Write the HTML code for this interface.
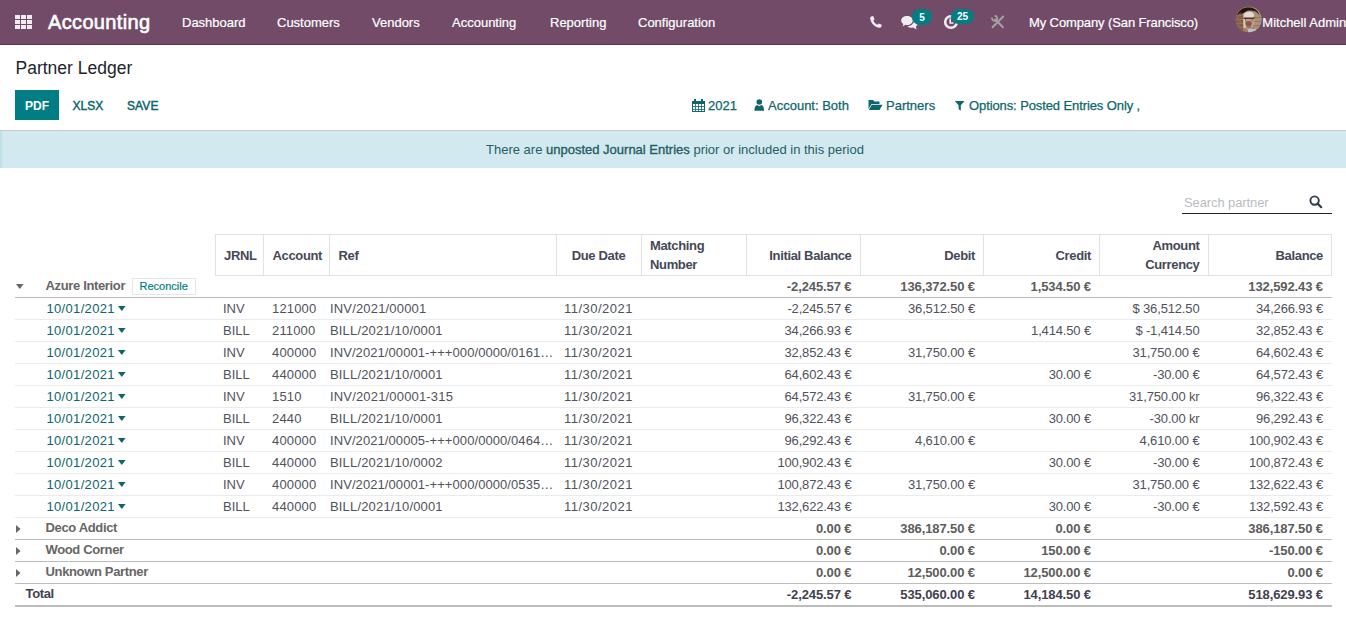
<!DOCTYPE html>
<html><head><meta charset="utf-8"><title>Partner Ledger</title>
<style>
html,body{margin:0;padding:0;background:#fff;}
body{width:1346px;height:624px;position:relative;overflow:hidden;font-family:"Liberation Sans", sans-serif;}
.t{position:absolute;white-space:nowrap;}
.r{position:absolute;display:block;}
</style></head><body>
<div class="r" style="left:0px;top:0px;width:1346px;height:44px;background:#714B67;"></div>
<div class="r" style="left:0px;top:44px;width:1346px;height:1px;background:#52364b;"></div>
<svg class="r" style="left:0;top:0" width="40" height="40"><rect x="15" y="15" width="5" height="4" fill="#f1ecf0"/><rect x="15" y="20" width="5" height="4" fill="#f1ecf0"/><rect x="15" y="25" width="5" height="4" fill="#f1ecf0"/><rect x="21" y="15" width="5" height="4" fill="#f1ecf0"/><rect x="21" y="20" width="5" height="4" fill="#f1ecf0"/><rect x="21" y="25" width="5" height="4" fill="#f1ecf0"/><rect x="27" y="15" width="5" height="4" fill="#f1ecf0"/><rect x="27" y="20" width="5" height="4" fill="#f1ecf0"/><rect x="27" y="25" width="5" height="4" fill="#f1ecf0"/></svg>
<div class="t" style="left:48px;top:12.07px;font-size:20px;line-height:20px;font-weight:400;color:#ffffff;letter-spacing:0.35px;-webkit-text-stroke:0.6px #fff;">Accounting</div>
<div class="t" style="left:182px;top:15.60px;font-size:13px;line-height:13px;font-weight:400;color:#ffffff;-webkit-text-stroke:0.2px #fff;">Dashboard</div>
<div class="t" style="left:277px;top:15.60px;font-size:13px;line-height:13px;font-weight:400;color:#ffffff;-webkit-text-stroke:0.2px #fff;">Customers</div>
<div class="t" style="left:372px;top:15.60px;font-size:13px;line-height:13px;font-weight:400;color:#ffffff;-webkit-text-stroke:0.2px #fff;">Vendors</div>
<div class="t" style="left:452px;top:15.60px;font-size:13px;line-height:13px;font-weight:400;color:#ffffff;-webkit-text-stroke:0.2px #fff;">Accounting</div>
<div class="t" style="left:550px;top:15.60px;font-size:13px;line-height:13px;font-weight:400;color:#ffffff;-webkit-text-stroke:0.2px #fff;">Reporting</div>
<div class="t" style="left:638px;top:15.60px;font-size:13px;line-height:13px;font-weight:400;color:#ffffff;-webkit-text-stroke:0.2px #fff;">Configuration</div>
<svg class="r" style="left:869px;top:15px" width="14" height="14" viewBox="0 0 14 14"><path d="M2.2 1.6 L4.2 1.1 L5.6 4.4 L4.3 5.5 C5 7.3 6.6 8.9 8.4 9.7 L9.5 8.4 L12.8 9.8 L12.3 11.8 C12 12.6 11.3 12.9 10.6 12.8 C5.8 12.2 1.9 8.3 1.2 3.4 C1.1 2.5 1.5 1.8 2.2 1.6 Z" fill="#f1ecf0"/></svg>
<svg class="r" style="left:900px;top:14px" width="20" height="17" viewBox="0 0 20 17"><path d="M7 2 C3.7 2 1.2 4 1.2 6.5 C1.2 8 2 9.2 3.3 10 L2.6 12.4 L5.5 10.8 C6 10.9 6.5 11 7 11 C10.3 11 12.8 9 12.8 6.5 C12.8 4 10.3 2 7 2 Z" fill="#f1ecf0"/><path d="M14 6.5 C14 9.6 11 12 7.5 12.2 C8.5 13.2 10 13.8 11.7 13.8 C12.2 13.8 12.6 13.7 13 13.6 L16.6 15.4 L15.8 12.6 C17 11.8 17.8 10.7 17.8 9.4 C17.8 7.9 16.7 6.6 14 6.5 Z" fill="#f1ecf0"/></svg>
<div class="r" style="left:912px;top:9px;width:20px;height:16px;background:#017e84;border-radius:8px;"></div>
<div class="t" style="left:622px;width:600px;text-align:center;top:12.54px;font-size:10px;line-height:10px;font-weight:700;color:#ffffff;">5</div>
<svg class="r" style="left:943px;top:14px" width="17" height="17" viewBox="0 0 17 17"><circle cx="8" cy="8" r="5.8" fill="none" stroke="#f1ecf0" stroke-width="2.6"/><path d="M7.2 4.5 L7.2 9 L10.5 9" fill="none" stroke="#f1ecf0" stroke-width="1.6"/></svg>
<div class="r" style="left:951px;top:9px;width:23px;height:15px;background:#017e84;border-radius:8px;"></div>
<div class="t" style="left:662.5px;width:600px;text-align:center;top:12.04px;font-size:10px;line-height:10px;font-weight:700;color:#ffffff;">25</div>
<svg class="r" style="left:991px;top:15px" width="14" height="14" viewBox="0 0 14 14"><path d="M12.2 1.6 L1.6 12.3" stroke="#a79fa6" stroke-width="2.1" stroke-linecap="round"/><path d="M4.2 4.2 L11.9 12.2" stroke="#a79fa6" stroke-width="2" stroke-linecap="round"/><path d="M1.2 2.6 A2.6 2.6 0 1 0 3.6 0.8" fill="none" stroke="#a79fa6" stroke-width="1.7"/></svg>
<div class="t" style="left:1029px;top:15.60px;font-size:13px;line-height:13px;font-weight:400;color:#ffffff;letter-spacing:-0.11px;-webkit-text-stroke:0.2px #fff;">My Company (San Francisco)</div>
<svg class="r" style="left:1235px;top:6px" width="28" height="28" viewBox="0 0 28 28"><defs><clipPath id="avc"><circle cx="13.6" cy="13.4" r="12.9"/></clipPath></defs><g clip-path="url(#avc)"><rect x="0" y="0" width="28" height="28" fill="#9c7f68"/><rect x="0" y="0" width="8" height="28" fill="#8c5a3e"/><path d="M0 9.5 H8 M0 13.5 H8 M0 17.5 H8 M0 21.5 H8 M3 9.5 V13.5 M5 13.5 V17.5 M3 17.5 V21.5" stroke="#7d8290" stroke-width="1" opacity="0.6"/><rect x="19" y="0" width="9" height="28" fill="#ab9277"/><path d="M19 11.5 H28 M19 15.5 H28 M19 19.5 H28" stroke="#7f6d60" stroke-width="1" opacity="0.6"/><ellipse cx="13.8" cy="15" rx="5.8" ry="9" fill="#c29b82"/><rect x="8.5" y="6" width="2" height="16" fill="#ddd6d0" opacity="0.8"/><ellipse cx="14.2" cy="9" rx="5" ry="3.6" fill="#e4d9cf"/><path d="M8.5 12.3 H19.5" stroke="#4e3530" stroke-width="1.5"/><path d="M10.5 13 V15.5 M17 13 V15.5" stroke="#4e3530" stroke-width="0.8" opacity="0.7"/><ellipse cx="13.6" cy="17.5" rx="3.2" ry="2.6" fill="#7e4d3e" opacity="0.85"/><ellipse cx="13.8" cy="21" rx="2.5" ry="1.2" fill="#a36d5a"/><rect x="13" y="23" width="8" height="5" fill="#b9c3cb"/><path d="M2 9.5 C4.5 3 10 1.5 14 1.6 C18.5 1.7 22.5 3.5 24.5 9.5 C22 5.5 19 4.3 14 4.5 C9 4.6 5.5 6 2 9.5 Z" fill="#21150f"/><path d="M5 8 C7 5 10 3 14 3 L9 7 Z" fill="#21150f"/></g></svg>
<div class="t" style="left:1262.3px;top:15.60px;font-size:13px;line-height:13px;font-weight:400;color:#ffffff;-webkit-text-stroke:0.2px #fff;">Mitchell Admin</div>
<div class="t" style="left:15.5px;top:60.49px;font-size:17.5px;line-height:17.5px;font-weight:400;color:#212529;">Partner Ledger</div>
<div class="r" style="left:15px;top:90px;width:44px;height:30px;background:#017e84;"></div>
<div class="t" style="left:-263px;width:600px;text-align:center;top:99.84px;font-size:12px;line-height:12px;font-weight:700;color:#ffffff;">PDF</div>
<div class="t" style="left:72.5px;top:100.44px;font-size:12px;line-height:12px;font-weight:400;color:#0c666c;-webkit-text-stroke:0.45px #0c666c;">XLSX</div>
<div class="t" style="left:127px;top:100.44px;font-size:12px;line-height:12px;font-weight:400;color:#0c666c;letter-spacing:0.1px;-webkit-text-stroke:0.45px #0c666c;">SAVE</div>
<svg class="r" style="left:692px;top:99px" width="13" height="14" viewBox="0 0 13 14"><g shape-rendering="crispEdges" fill="#0c666c"><rect x="0" y="2" width="13" height="3"/><rect x="0" y="2" width="1" height="11"/><rect x="12" y="2" width="1" height="11"/><rect x="0" y="12" width="13" height="1"/><rect x="3" y="5" width="1" height="7" opacity="0.8"/><rect x="6" y="5" width="1" height="7" opacity="0.8"/><rect x="9" y="5" width="1" height="7" opacity="0.8"/><rect x="1" y="7" width="11" height="1" opacity="0.8"/><rect x="1" y="10" width="11" height="1" opacity="0.8"/><rect x="2" y="0" width="2" height="3"/><rect x="9" y="0" width="2" height="3"/></g></svg>
<div class="t" style="left:708px;top:99.00px;font-size:13px;line-height:13px;font-weight:400;color:#0c666c;-webkit-text-stroke:0.25px #0c666c;">2021</div>
<svg class="r" style="left:754px;top:99px" width="11" height="13" viewBox="0 0 11 13"><circle cx="5.3" cy="3" r="2.8" fill="#0c666c"/><path d="M0.5 11.8 C0.5 7.5 2 6.2 3.3 6 L5.3 7.2 L7.3 6 C8.6 6.2 10.1 7.5 10.1 11.8 Z" fill="#0c666c"/></svg>
<div class="t" style="left:768px;top:99.00px;font-size:13px;line-height:13px;font-weight:400;color:#0c666c;-webkit-text-stroke:0.25px #0c666c;">Account: Both</div>
<svg class="r" style="left:868px;top:99px" width="15" height="12" viewBox="0 0 15 12"><path d="M0.5 1 H5 L6.5 2.5 H11.5 V5 H3.5 L0.5 10 Z" fill="#0c666c"/><path d="M3.8 5.8 H14.5 L11.5 11 H0.8 Z" fill="#0c666c"/></svg>
<div class="t" style="left:886px;top:99.00px;font-size:13px;line-height:13px;font-weight:400;color:#0c666c;-webkit-text-stroke:0.25px #0c666c;">Partners</div>
<svg class="r" style="left:954px;top:100px" width="12" height="12" viewBox="0 0 12 12"><path d="M0.8 1 H10.5 L6.8 5.2 V10.8 L4.6 9 V5.2 Z" fill="#0c666c"/></svg>
<div class="t" style="left:969px;top:99.00px;font-size:13px;line-height:13px;font-weight:400;color:#0c666c;letter-spacing:-0.1px;-webkit-text-stroke:0.25px #0c666c;">Options: Posted Entries Only ,</div>
<div class="r" style="left:0px;top:130px;width:1346px;height:1px;background:#c9c6cd;"></div>
<div class="r" style="left:0px;top:131px;width:1346px;height:37px;background:#d2eaef;"></div>
<div class="r" style="left:0px;top:131px;width:2px;height:37px;background:#bde3e9;"></div>
<div class="t" style="left:375px;width:600px;text-align:center;top:143.00px;font-size:13px;line-height:13px;font-weight:400;color:#275c66;">There are <span style="-webkit-text-stroke:0.35px #275c66">unposted Journal Entries</span> prior or included in this period</div>
<div class="t" style="left:1184px;top:196.00px;font-size:13px;line-height:13px;font-weight:400;color:#b8bdc2;letter-spacing:-0.1px;">Search partner</div>
<div class="r" style="left:1182px;top:213px;width:150px;height:1px;background:#222222;"></div>
<svg class="r" style="left:1309px;top:195px" width="14" height="14" viewBox="0 0 14 14"><circle cx="5.6" cy="5.6" r="4.2" fill="none" stroke="#2d3a47" stroke-width="1.9"/><path d="M8.6 8.6 L12.2 12.2" stroke="#2d3a47" stroke-width="2.2" stroke-linecap="round"/></svg>
<div class="r" style="left:215px;top:234px;width:1117px;height:1px;background:#e2e2e2;"></div>
<div class="r" style="left:215px;top:275px;width:1117px;height:1px;background:#e2e2e2;"></div>
<div class="r" style="left:215px;top:234px;width:1px;height:42px;background:#e2e2e2;"></div>
<div class="r" style="left:263px;top:234px;width:1px;height:42px;background:#e2e2e2;"></div>
<div class="r" style="left:329px;top:234px;width:1px;height:42px;background:#e2e2e2;"></div>
<div class="r" style="left:556px;top:234px;width:1px;height:42px;background:#e2e2e2;"></div>
<div class="r" style="left:641px;top:234px;width:1px;height:42px;background:#e2e2e2;"></div>
<div class="r" style="left:746px;top:234px;width:1px;height:42px;background:#e2e2e2;"></div>
<div class="r" style="left:860px;top:234px;width:1px;height:42px;background:#e2e2e2;"></div>
<div class="r" style="left:983px;top:234px;width:1px;height:42px;background:#e2e2e2;"></div>
<div class="r" style="left:1099px;top:234px;width:1px;height:42px;background:#e2e2e2;"></div>
<div class="r" style="left:1208px;top:234px;width:1px;height:42px;background:#e2e2e2;"></div>
<div class="r" style="left:1331px;top:234px;width:1px;height:42px;background:#e2e2e2;"></div>
<div class="t" style="left:224px;top:249.00px;font-size:13px;line-height:13px;font-weight:700;color:#454856;letter-spacing:-0.35px;">JRNL</div>
<div class="t" style="left:272.5px;top:249.00px;font-size:13px;line-height:13px;font-weight:700;color:#454856;letter-spacing:-0.35px;">Account</div>
<div class="t" style="left:338.5px;top:249.00px;font-size:13px;line-height:13px;font-weight:700;color:#454856;letter-spacing:-0.35px;">Ref</div>
<div class="t" style="left:298.5px;width:600px;text-align:center;top:249.00px;font-size:13px;line-height:13px;font-weight:700;color:#454856;letter-spacing:-0.35px;">Due Date</div>
<div class="t" style="left:650px;top:238.50px;font-size:13px;line-height:13px;font-weight:700;color:#454856;letter-spacing:-0.35px;">Matching</div>
<div class="t" style="left:650px;top:257.50px;font-size:13px;line-height:13px;font-weight:700;color:#454856;letter-spacing:-0.35px;">Number</div>
<div class="t" style="right:494.5px;top:249.00px;font-size:13px;line-height:13px;font-weight:700;color:#454856;letter-spacing:-0.35px;">Initial Balance</div>
<div class="t" style="right:371px;top:249.00px;font-size:13px;line-height:13px;font-weight:700;color:#454856;letter-spacing:-0.35px;">Debit</div>
<div class="t" style="right:255px;top:249.00px;font-size:13px;line-height:13px;font-weight:700;color:#454856;letter-spacing:-0.35px;">Credit</div>
<div class="t" style="right:146.5px;top:238.50px;font-size:13px;line-height:13px;font-weight:700;color:#454856;letter-spacing:-0.35px;">Amount</div>
<div class="t" style="right:146.5px;top:257.50px;font-size:13px;line-height:13px;font-weight:700;color:#454856;letter-spacing:-0.35px;">Currency</div>
<div class="t" style="right:23px;top:249.00px;font-size:13px;line-height:13px;font-weight:700;color:#454856;letter-spacing:-0.35px;">Balance</div>
<svg class="r" style="left:16.2px;top:284.2px" width="9" height="6" viewBox="0 0 9 6"><path d="M0 0 H7.6 L3.8 5 Z" fill="#666666"/></svg>
<div class="t" style="left:45.5px;top:279.00px;font-size:13px;line-height:13px;font-weight:700;color:#666666;letter-spacing:-0.35px;">Azure Interior</div>
<div class="r" style="left:132px;top:278px;width:64px;height:17px;background:#ffffff;border:1px solid #e1e7ea;box-sizing:border-box;"></div>
<div class="t" style="left:139.5px;top:280.69px;font-size:11px;line-height:11px;font-weight:400;color:#017e84;-webkit-text-stroke:0.2px #017e84;">Reconcile</div>
<div class="t" style="right:494.5px;top:280.00px;font-size:13px;line-height:13px;font-weight:700;color:#5c5c5c;letter-spacing:-0.1px;">-2,245.57 €</div>
<div class="t" style="right:371px;top:280.00px;font-size:13px;line-height:13px;font-weight:700;color:#5c5c5c;letter-spacing:-0.1px;">136,372.50 €</div>
<div class="t" style="right:255px;top:280.00px;font-size:13px;line-height:13px;font-weight:700;color:#5c5c5c;letter-spacing:-0.1px;">1,534.50 €</div>
<div class="t" style="right:23px;top:280.00px;font-size:13px;line-height:13px;font-weight:700;color:#5c5c5c;letter-spacing:-0.1px;">132,592.43 €</div>
<div class="r" style="left:15px;top:297px;width:1317px;height:1px;background:#bcbcbc;"></div>
<div class="t" style="left:46.5px;top:302.00px;font-size:13px;line-height:13px;font-weight:400;color:#0c666c;letter-spacing:0.33px;">10/01/2021</div>
<svg class="r" style="left:118px;top:306px" width="9" height="6" viewBox="0 0 9 6"><path d="M0 0 H7.6 L3.8 5 Z" fill="#0c666c"/></svg>
<div class="t" style="left:223px;top:302.00px;font-size:13px;line-height:13px;font-weight:400;color:#50525b;">INV</div>
<div class="t" style="left:272px;top:302.00px;font-size:13px;line-height:13px;font-weight:400;color:#50525b;letter-spacing:0.15px;">121000</div>
<div class="t" style="left:330px;top:301.50px;font-size:13px;line-height:13px;font-weight:400;color:#50525b;letter-spacing:0.17px;">INV/2021/00001</div>
<div class="t" style="left:298.5px;width:600px;text-align:center;top:302.00px;font-size:13px;line-height:13px;font-weight:400;color:#50525b;letter-spacing:0.5px;">11/30/2021</div>
<div class="t" style="right:494.5px;top:302.00px;font-size:13px;line-height:13px;font-weight:400;color:#50525b;letter-spacing:-0.15px;">-2,245.57 €</div>
<div class="t" style="right:371px;top:302.00px;font-size:13px;line-height:13px;font-weight:400;color:#50525b;letter-spacing:-0.15px;">36,512.50 €</div>
<div class="t" style="right:146.5px;top:302.00px;font-size:13px;line-height:13px;font-weight:400;color:#50525b;letter-spacing:-0.15px;">$ 36,512.50</div>
<div class="t" style="right:23px;top:302.00px;font-size:13px;line-height:13px;font-weight:400;color:#50525b;letter-spacing:-0.15px;">34,266.93 €</div>
<div class="r" style="left:15px;top:319px;width:1317px;height:1px;background:#ebebeb;"></div>
<div class="t" style="left:46.5px;top:324.00px;font-size:13px;line-height:13px;font-weight:400;color:#0c666c;letter-spacing:0.33px;">10/01/2021</div>
<svg class="r" style="left:118px;top:328px" width="9" height="6" viewBox="0 0 9 6"><path d="M0 0 H7.6 L3.8 5 Z" fill="#0c666c"/></svg>
<div class="t" style="left:223px;top:324.00px;font-size:13px;line-height:13px;font-weight:400;color:#50525b;">BILL</div>
<div class="t" style="left:272px;top:324.00px;font-size:13px;line-height:13px;font-weight:400;color:#50525b;letter-spacing:0.15px;">211000</div>
<div class="t" style="left:330px;top:323.50px;font-size:13px;line-height:13px;font-weight:400;color:#50525b;letter-spacing:0.17px;">BILL/2021/10/0001</div>
<div class="t" style="left:298.5px;width:600px;text-align:center;top:324.00px;font-size:13px;line-height:13px;font-weight:400;color:#50525b;letter-spacing:0.5px;">11/30/2021</div>
<div class="t" style="right:494.5px;top:324.00px;font-size:13px;line-height:13px;font-weight:400;color:#50525b;letter-spacing:-0.15px;">34,266.93 €</div>
<div class="t" style="right:255px;top:324.00px;font-size:13px;line-height:13px;font-weight:400;color:#50525b;letter-spacing:-0.15px;">1,414.50 €</div>
<div class="t" style="right:146.5px;top:324.00px;font-size:13px;line-height:13px;font-weight:400;color:#50525b;letter-spacing:-0.15px;">$ -1,414.50</div>
<div class="t" style="right:23px;top:324.00px;font-size:13px;line-height:13px;font-weight:400;color:#50525b;letter-spacing:-0.15px;">32,852.43 €</div>
<div class="r" style="left:15px;top:341px;width:1317px;height:1px;background:#ebebeb;"></div>
<div class="t" style="left:46.5px;top:346.00px;font-size:13px;line-height:13px;font-weight:400;color:#0c666c;letter-spacing:0.33px;">10/01/2021</div>
<svg class="r" style="left:118px;top:350px" width="9" height="6" viewBox="0 0 9 6"><path d="M0 0 H7.6 L3.8 5 Z" fill="#0c666c"/></svg>
<div class="t" style="left:223px;top:346.00px;font-size:13px;line-height:13px;font-weight:400;color:#50525b;">INV</div>
<div class="t" style="left:272px;top:346.00px;font-size:13px;line-height:13px;font-weight:400;color:#50525b;letter-spacing:0.15px;">400000</div>
<div class="t" style="left:330px;top:345.50px;font-size:13px;line-height:13px;font-weight:400;color:#50525b;letter-spacing:0.08px;">INV/2021/00001-+++000/0000/0161…</div>
<div class="t" style="left:298.5px;width:600px;text-align:center;top:346.00px;font-size:13px;line-height:13px;font-weight:400;color:#50525b;letter-spacing:0.5px;">11/30/2021</div>
<div class="t" style="right:494.5px;top:346.00px;font-size:13px;line-height:13px;font-weight:400;color:#50525b;letter-spacing:-0.15px;">32,852.43 €</div>
<div class="t" style="right:371px;top:346.00px;font-size:13px;line-height:13px;font-weight:400;color:#50525b;letter-spacing:-0.15px;">31,750.00 €</div>
<div class="t" style="right:146.5px;top:346.00px;font-size:13px;line-height:13px;font-weight:400;color:#50525b;letter-spacing:-0.15px;">31,750.00 €</div>
<div class="t" style="right:23px;top:346.00px;font-size:13px;line-height:13px;font-weight:400;color:#50525b;letter-spacing:-0.15px;">64,602.43 €</div>
<div class="r" style="left:15px;top:363px;width:1317px;height:1px;background:#ebebeb;"></div>
<div class="t" style="left:46.5px;top:368.00px;font-size:13px;line-height:13px;font-weight:400;color:#0c666c;letter-spacing:0.33px;">10/01/2021</div>
<svg class="r" style="left:118px;top:372px" width="9" height="6" viewBox="0 0 9 6"><path d="M0 0 H7.6 L3.8 5 Z" fill="#0c666c"/></svg>
<div class="t" style="left:223px;top:368.00px;font-size:13px;line-height:13px;font-weight:400;color:#50525b;">BILL</div>
<div class="t" style="left:272px;top:368.00px;font-size:13px;line-height:13px;font-weight:400;color:#50525b;letter-spacing:0.15px;">440000</div>
<div class="t" style="left:330px;top:367.50px;font-size:13px;line-height:13px;font-weight:400;color:#50525b;letter-spacing:0.17px;">BILL/2021/10/0001</div>
<div class="t" style="left:298.5px;width:600px;text-align:center;top:368.00px;font-size:13px;line-height:13px;font-weight:400;color:#50525b;letter-spacing:0.5px;">11/30/2021</div>
<div class="t" style="right:494.5px;top:368.00px;font-size:13px;line-height:13px;font-weight:400;color:#50525b;letter-spacing:-0.15px;">64,602.43 €</div>
<div class="t" style="right:255px;top:368.00px;font-size:13px;line-height:13px;font-weight:400;color:#50525b;letter-spacing:-0.15px;">30.00 €</div>
<div class="t" style="right:146.5px;top:368.00px;font-size:13px;line-height:13px;font-weight:400;color:#50525b;letter-spacing:-0.15px;">-30.00 €</div>
<div class="t" style="right:23px;top:368.00px;font-size:13px;line-height:13px;font-weight:400;color:#50525b;letter-spacing:-0.15px;">64,572.43 €</div>
<div class="r" style="left:15px;top:385px;width:1317px;height:1px;background:#ebebeb;"></div>
<div class="t" style="left:46.5px;top:390.00px;font-size:13px;line-height:13px;font-weight:400;color:#0c666c;letter-spacing:0.33px;">10/01/2021</div>
<svg class="r" style="left:118px;top:394px" width="9" height="6" viewBox="0 0 9 6"><path d="M0 0 H7.6 L3.8 5 Z" fill="#0c666c"/></svg>
<div class="t" style="left:223px;top:390.00px;font-size:13px;line-height:13px;font-weight:400;color:#50525b;">INV</div>
<div class="t" style="left:272px;top:390.00px;font-size:13px;line-height:13px;font-weight:400;color:#50525b;letter-spacing:0.15px;">1510</div>
<div class="t" style="left:330px;top:389.50px;font-size:13px;line-height:13px;font-weight:400;color:#50525b;letter-spacing:0.17px;">INV/2021/00001-315</div>
<div class="t" style="left:298.5px;width:600px;text-align:center;top:390.00px;font-size:13px;line-height:13px;font-weight:400;color:#50525b;letter-spacing:0.5px;">11/30/2021</div>
<div class="t" style="right:494.5px;top:390.00px;font-size:13px;line-height:13px;font-weight:400;color:#50525b;letter-spacing:-0.15px;">64,572.43 €</div>
<div class="t" style="right:371px;top:390.00px;font-size:13px;line-height:13px;font-weight:400;color:#50525b;letter-spacing:-0.15px;">31,750.00 €</div>
<div class="t" style="right:146.5px;top:390.00px;font-size:13px;line-height:13px;font-weight:400;color:#50525b;letter-spacing:-0.15px;">31,750.00 kr</div>
<div class="t" style="right:23px;top:390.00px;font-size:13px;line-height:13px;font-weight:400;color:#50525b;letter-spacing:-0.15px;">96,322.43 €</div>
<div class="r" style="left:15px;top:407px;width:1317px;height:1px;background:#ebebeb;"></div>
<div class="t" style="left:46.5px;top:412.00px;font-size:13px;line-height:13px;font-weight:400;color:#0c666c;letter-spacing:0.33px;">10/01/2021</div>
<svg class="r" style="left:118px;top:416px" width="9" height="6" viewBox="0 0 9 6"><path d="M0 0 H7.6 L3.8 5 Z" fill="#0c666c"/></svg>
<div class="t" style="left:223px;top:412.00px;font-size:13px;line-height:13px;font-weight:400;color:#50525b;">BILL</div>
<div class="t" style="left:272px;top:412.00px;font-size:13px;line-height:13px;font-weight:400;color:#50525b;letter-spacing:0.15px;">2440</div>
<div class="t" style="left:330px;top:411.50px;font-size:13px;line-height:13px;font-weight:400;color:#50525b;letter-spacing:0.17px;">BILL/2021/10/0001</div>
<div class="t" style="left:298.5px;width:600px;text-align:center;top:412.00px;font-size:13px;line-height:13px;font-weight:400;color:#50525b;letter-spacing:0.5px;">11/30/2021</div>
<div class="t" style="right:494.5px;top:412.00px;font-size:13px;line-height:13px;font-weight:400;color:#50525b;letter-spacing:-0.15px;">96,322.43 €</div>
<div class="t" style="right:255px;top:412.00px;font-size:13px;line-height:13px;font-weight:400;color:#50525b;letter-spacing:-0.15px;">30.00 €</div>
<div class="t" style="right:146.5px;top:412.00px;font-size:13px;line-height:13px;font-weight:400;color:#50525b;letter-spacing:-0.15px;">-30.00 kr</div>
<div class="t" style="right:23px;top:412.00px;font-size:13px;line-height:13px;font-weight:400;color:#50525b;letter-spacing:-0.15px;">96,292.43 €</div>
<div class="r" style="left:15px;top:429px;width:1317px;height:1px;background:#ebebeb;"></div>
<div class="t" style="left:46.5px;top:434.00px;font-size:13px;line-height:13px;font-weight:400;color:#0c666c;letter-spacing:0.33px;">10/01/2021</div>
<svg class="r" style="left:118px;top:438px" width="9" height="6" viewBox="0 0 9 6"><path d="M0 0 H7.6 L3.8 5 Z" fill="#0c666c"/></svg>
<div class="t" style="left:223px;top:434.00px;font-size:13px;line-height:13px;font-weight:400;color:#50525b;">INV</div>
<div class="t" style="left:272px;top:434.00px;font-size:13px;line-height:13px;font-weight:400;color:#50525b;letter-spacing:0.15px;">400000</div>
<div class="t" style="left:330px;top:433.50px;font-size:13px;line-height:13px;font-weight:400;color:#50525b;letter-spacing:0.08px;">INV/2021/00005-+++000/0000/0464…</div>
<div class="t" style="left:298.5px;width:600px;text-align:center;top:434.00px;font-size:13px;line-height:13px;font-weight:400;color:#50525b;letter-spacing:0.5px;">11/30/2021</div>
<div class="t" style="right:494.5px;top:434.00px;font-size:13px;line-height:13px;font-weight:400;color:#50525b;letter-spacing:-0.15px;">96,292.43 €</div>
<div class="t" style="right:371px;top:434.00px;font-size:13px;line-height:13px;font-weight:400;color:#50525b;letter-spacing:-0.15px;">4,610.00 €</div>
<div class="t" style="right:146.5px;top:434.00px;font-size:13px;line-height:13px;font-weight:400;color:#50525b;letter-spacing:-0.15px;">4,610.00 €</div>
<div class="t" style="right:23px;top:434.00px;font-size:13px;line-height:13px;font-weight:400;color:#50525b;letter-spacing:-0.15px;">100,902.43 €</div>
<div class="r" style="left:15px;top:451px;width:1317px;height:1px;background:#ebebeb;"></div>
<div class="t" style="left:46.5px;top:456.00px;font-size:13px;line-height:13px;font-weight:400;color:#0c666c;letter-spacing:0.33px;">10/01/2021</div>
<svg class="r" style="left:118px;top:460px" width="9" height="6" viewBox="0 0 9 6"><path d="M0 0 H7.6 L3.8 5 Z" fill="#0c666c"/></svg>
<div class="t" style="left:223px;top:456.00px;font-size:13px;line-height:13px;font-weight:400;color:#50525b;">BILL</div>
<div class="t" style="left:272px;top:456.00px;font-size:13px;line-height:13px;font-weight:400;color:#50525b;letter-spacing:0.15px;">440000</div>
<div class="t" style="left:330px;top:455.50px;font-size:13px;line-height:13px;font-weight:400;color:#50525b;letter-spacing:0.17px;">BILL/2021/10/0002</div>
<div class="t" style="left:298.5px;width:600px;text-align:center;top:456.00px;font-size:13px;line-height:13px;font-weight:400;color:#50525b;letter-spacing:0.5px;">11/30/2021</div>
<div class="t" style="right:494.5px;top:456.00px;font-size:13px;line-height:13px;font-weight:400;color:#50525b;letter-spacing:-0.15px;">100,902.43 €</div>
<div class="t" style="right:255px;top:456.00px;font-size:13px;line-height:13px;font-weight:400;color:#50525b;letter-spacing:-0.15px;">30.00 €</div>
<div class="t" style="right:146.5px;top:456.00px;font-size:13px;line-height:13px;font-weight:400;color:#50525b;letter-spacing:-0.15px;">-30.00 €</div>
<div class="t" style="right:23px;top:456.00px;font-size:13px;line-height:13px;font-weight:400;color:#50525b;letter-spacing:-0.15px;">100,872.43 €</div>
<div class="r" style="left:15px;top:473px;width:1317px;height:1px;background:#ebebeb;"></div>
<div class="t" style="left:46.5px;top:478.00px;font-size:13px;line-height:13px;font-weight:400;color:#0c666c;letter-spacing:0.33px;">10/01/2021</div>
<svg class="r" style="left:118px;top:482px" width="9" height="6" viewBox="0 0 9 6"><path d="M0 0 H7.6 L3.8 5 Z" fill="#0c666c"/></svg>
<div class="t" style="left:223px;top:478.00px;font-size:13px;line-height:13px;font-weight:400;color:#50525b;">INV</div>
<div class="t" style="left:272px;top:478.00px;font-size:13px;line-height:13px;font-weight:400;color:#50525b;letter-spacing:0.15px;">400000</div>
<div class="t" style="left:330px;top:477.50px;font-size:13px;line-height:13px;font-weight:400;color:#50525b;letter-spacing:0.08px;">INV/2021/00001-+++000/0000/0535…</div>
<div class="t" style="left:298.5px;width:600px;text-align:center;top:478.00px;font-size:13px;line-height:13px;font-weight:400;color:#50525b;letter-spacing:0.5px;">11/30/2021</div>
<div class="t" style="right:494.5px;top:478.00px;font-size:13px;line-height:13px;font-weight:400;color:#50525b;letter-spacing:-0.15px;">100,872.43 €</div>
<div class="t" style="right:371px;top:478.00px;font-size:13px;line-height:13px;font-weight:400;color:#50525b;letter-spacing:-0.15px;">31,750.00 €</div>
<div class="t" style="right:146.5px;top:478.00px;font-size:13px;line-height:13px;font-weight:400;color:#50525b;letter-spacing:-0.15px;">31,750.00 €</div>
<div class="t" style="right:23px;top:478.00px;font-size:13px;line-height:13px;font-weight:400;color:#50525b;letter-spacing:-0.15px;">132,622.43 €</div>
<div class="r" style="left:15px;top:495px;width:1317px;height:1px;background:#ebebeb;"></div>
<div class="t" style="left:46.5px;top:500.00px;font-size:13px;line-height:13px;font-weight:400;color:#0c666c;letter-spacing:0.33px;">10/01/2021</div>
<svg class="r" style="left:118px;top:504px" width="9" height="6" viewBox="0 0 9 6"><path d="M0 0 H7.6 L3.8 5 Z" fill="#0c666c"/></svg>
<div class="t" style="left:223px;top:500.00px;font-size:13px;line-height:13px;font-weight:400;color:#50525b;">BILL</div>
<div class="t" style="left:272px;top:500.00px;font-size:13px;line-height:13px;font-weight:400;color:#50525b;letter-spacing:0.15px;">440000</div>
<div class="t" style="left:330px;top:499.50px;font-size:13px;line-height:13px;font-weight:400;color:#50525b;letter-spacing:0.17px;">BILL/2021/10/0001</div>
<div class="t" style="left:298.5px;width:600px;text-align:center;top:500.00px;font-size:13px;line-height:13px;font-weight:400;color:#50525b;letter-spacing:0.5px;">11/30/2021</div>
<div class="t" style="right:494.5px;top:500.00px;font-size:13px;line-height:13px;font-weight:400;color:#50525b;letter-spacing:-0.15px;">132,622.43 €</div>
<div class="t" style="right:255px;top:500.00px;font-size:13px;line-height:13px;font-weight:400;color:#50525b;letter-spacing:-0.15px;">30.00 €</div>
<div class="t" style="right:146.5px;top:500.00px;font-size:13px;line-height:13px;font-weight:400;color:#50525b;letter-spacing:-0.15px;">-30.00 €</div>
<div class="t" style="right:23px;top:500.00px;font-size:13px;line-height:13px;font-weight:400;color:#50525b;letter-spacing:-0.15px;">132,592.43 €</div>
<div class="r" style="left:15px;top:517px;width:1317px;height:1px;background:#ebebeb;"></div>
<svg class="r" style="left:16px;top:525px" width="5" height="9" viewBox="0 0 5 9"><path d="M0 0 V8 L4.5 4 Z" fill="#666666"/></svg>
<div class="t" style="left:45.5px;top:521.00px;font-size:13px;line-height:13px;font-weight:700;color:#666666;letter-spacing:-0.35px;">Deco Addict</div>
<div class="t" style="right:494.5px;top:522.00px;font-size:13px;line-height:13px;font-weight:700;color:#5c5c5c;letter-spacing:-0.1px;">0.00 €</div>
<div class="t" style="right:371px;top:522.00px;font-size:13px;line-height:13px;font-weight:700;color:#5c5c5c;letter-spacing:-0.1px;">386,187.50 €</div>
<div class="t" style="right:255px;top:522.00px;font-size:13px;line-height:13px;font-weight:700;color:#5c5c5c;letter-spacing:-0.1px;">0.00 €</div>
<div class="t" style="right:23px;top:522.00px;font-size:13px;line-height:13px;font-weight:700;color:#5c5c5c;letter-spacing:-0.1px;">386,187.50 €</div>
<div class="r" style="left:15px;top:539px;width:1317px;height:1px;background:#bcbcbc;"></div>
<svg class="r" style="left:16px;top:547px" width="5" height="9" viewBox="0 0 5 9"><path d="M0 0 V8 L4.5 4 Z" fill="#666666"/></svg>
<div class="t" style="left:45.5px;top:543.00px;font-size:13px;line-height:13px;font-weight:700;color:#666666;letter-spacing:-0.35px;">Wood Corner</div>
<div class="t" style="right:494.5px;top:544.00px;font-size:13px;line-height:13px;font-weight:700;color:#5c5c5c;letter-spacing:-0.1px;">0.00 €</div>
<div class="t" style="right:371px;top:544.00px;font-size:13px;line-height:13px;font-weight:700;color:#5c5c5c;letter-spacing:-0.1px;">0.00 €</div>
<div class="t" style="right:255px;top:544.00px;font-size:13px;line-height:13px;font-weight:700;color:#5c5c5c;letter-spacing:-0.1px;">150.00 €</div>
<div class="t" style="right:23px;top:544.00px;font-size:13px;line-height:13px;font-weight:700;color:#5c5c5c;letter-spacing:-0.1px;">-150.00 €</div>
<div class="r" style="left:15px;top:561px;width:1317px;height:1px;background:#bcbcbc;"></div>
<svg class="r" style="left:16px;top:569px" width="5" height="9" viewBox="0 0 5 9"><path d="M0 0 V8 L4.5 4 Z" fill="#666666"/></svg>
<div class="t" style="left:45.5px;top:565.00px;font-size:13px;line-height:13px;font-weight:700;color:#666666;letter-spacing:-0.35px;">Unknown Partner</div>
<div class="t" style="right:494.5px;top:566.00px;font-size:13px;line-height:13px;font-weight:700;color:#5c5c5c;letter-spacing:-0.1px;">0.00 €</div>
<div class="t" style="right:371px;top:566.00px;font-size:13px;line-height:13px;font-weight:700;color:#5c5c5c;letter-spacing:-0.1px;">12,500.00 €</div>
<div class="t" style="right:255px;top:566.00px;font-size:13px;line-height:13px;font-weight:700;color:#5c5c5c;letter-spacing:-0.1px;">12,500.00 €</div>
<div class="t" style="right:23px;top:566.00px;font-size:13px;line-height:13px;font-weight:700;color:#5c5c5c;letter-spacing:-0.1px;">0.00 €</div>
<div class="r" style="left:15px;top:583px;width:1317px;height:1px;background:#bcbcbc;"></div>
<div class="t" style="left:25.5px;top:587.00px;font-size:13px;line-height:13px;font-weight:700;color:#3f4150;letter-spacing:-0.35px;">Total</div>
<div class="t" style="right:494.5px;top:588.00px;font-size:13px;line-height:13px;font-weight:700;color:#3f4150;letter-spacing:-0.1px;">-2,245.57 €</div>
<div class="t" style="right:371px;top:588.00px;font-size:13px;line-height:13px;font-weight:700;color:#3f4150;letter-spacing:-0.1px;">535,060.00 €</div>
<div class="t" style="right:255px;top:588.00px;font-size:13px;line-height:13px;font-weight:700;color:#3f4150;letter-spacing:-0.1px;">14,184.50 €</div>
<div class="t" style="right:23px;top:588.00px;font-size:13px;line-height:13px;font-weight:700;color:#3f4150;letter-spacing:-0.1px;">518,629.93 €</div>
<div class="r" style="left:15px;top:605px;width:1317px;height:2px;background:#bdbdbd;"></div>
</body></html>
